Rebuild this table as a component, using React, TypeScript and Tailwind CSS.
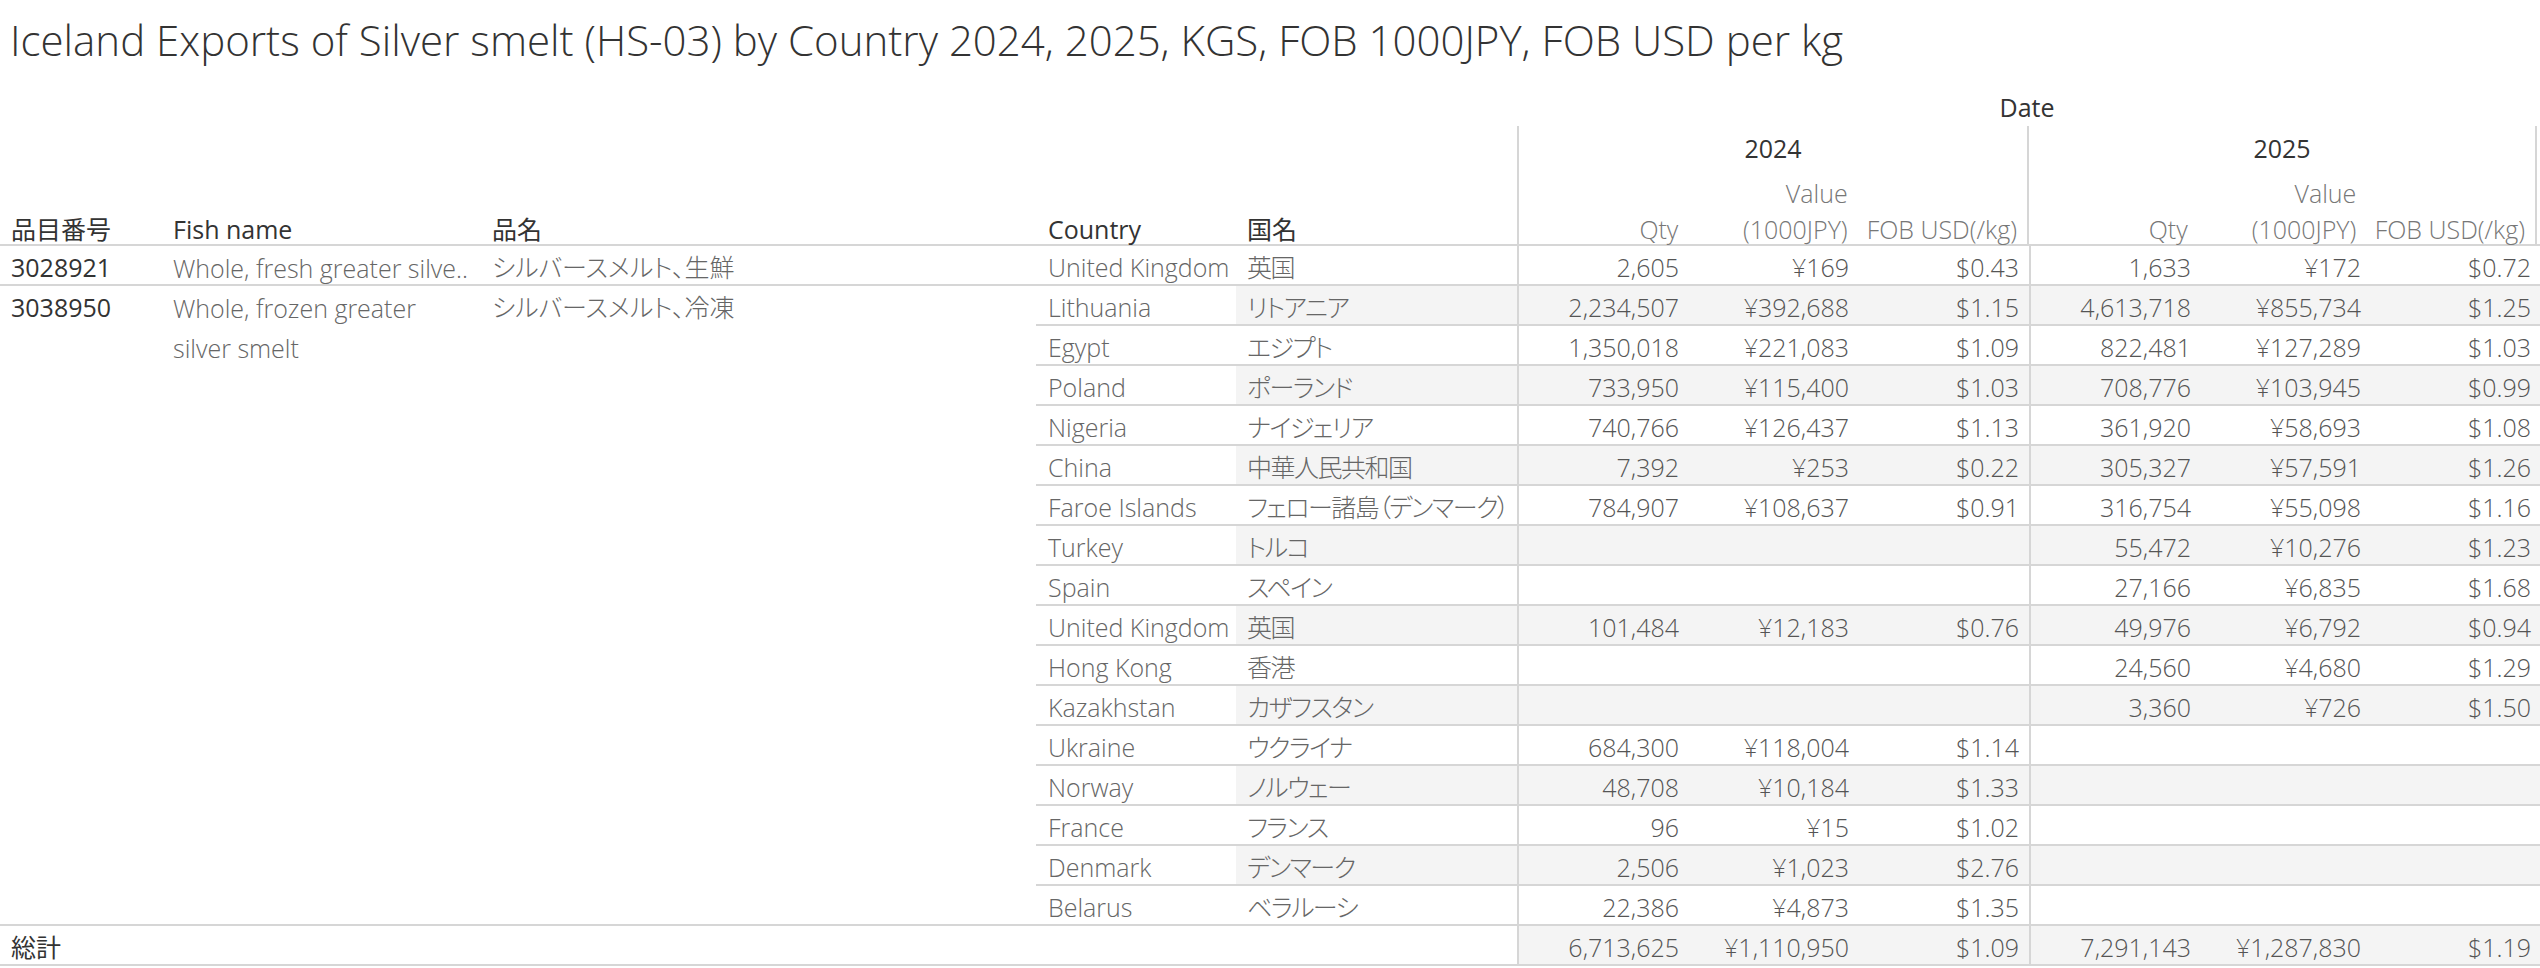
import React from "react";

// one row of the crosstab: country, 国名, then 2024 and 2025 (qty, value, fob)
type Row = {
  country: string;
  jp: string;
  y24: [string, string, string] | null;
  y25: [string, string, string] | null;
};

const firstGroup: Row = {
  country: "United Kingdom",
  jp: "英国",
  y24: ["2,605", "¥169", "$0.43"],
  y25: ["1,633", "¥172", "$0.72"],
};

const frozenRows: Row[] = [
  { country: "Lithuania", jp: "リトアニア", y24: ["2,234,507", "¥392,688", "$1.15"], y25: ["4,613,718", "¥855,734", "$1.25"] },
  { country: "Egypt", jp: "エジプト", y24: ["1,350,018", "¥221,083", "$1.09"], y25: ["822,481", "¥127,289", "$1.03"] },
  { country: "Poland", jp: "ポーランド", y24: ["733,950", "¥115,400", "$1.03"], y25: ["708,776", "¥103,945", "$0.99"] },
  { country: "Nigeria", jp: "ナイジェリア", y24: ["740,766", "¥126,437", "$1.13"], y25: ["361,920", "¥58,693", "$1.08"] },
  { country: "China", jp: "中華人民共和国", y24: ["7,392", "¥253", "$0.22"], y25: ["305,327", "¥57,591", "$1.26"] },
  { country: "Faroe Islands", jp: "フェロー諸島（デンマーク）", y24: ["784,907", "¥108,637", "$0.91"], y25: ["316,754", "¥55,098", "$1.16"] },
  { country: "Turkey", jp: "トルコ", y24: null, y25: ["55,472", "¥10,276", "$1.23"] },
  { country: "Spain", jp: "スペイン", y24: null, y25: ["27,166", "¥6,835", "$1.68"] },
  { country: "United Kingdom", jp: "英国", y24: ["101,484", "¥12,183", "$0.76"], y25: ["49,976", "¥6,792", "$0.94"] },
  { country: "Hong Kong", jp: "香港", y24: null, y25: ["24,560", "¥4,680", "$1.29"] },
  { country: "Kazakhstan", jp: "カザフスタン", y24: null, y25: ["3,360", "¥726", "$1.50"] },
  { country: "Ukraine", jp: "ウクライナ", y24: ["684,300", "¥118,004", "$1.14"], y25: null },
  { country: "Norway", jp: "ノルウェー", y24: ["48,708", "¥10,184", "$1.33"], y25: null },
  { country: "France", jp: "フランス", y24: ["96", "¥15", "$1.02"], y25: null },
  { country: "Denmark", jp: "デンマーク", y24: ["2,506", "¥1,023", "$2.76"], y25: null },
  { country: "Belarus", jp: "ベラルーシ", y24: ["22,386", "¥4,873", "$1.35"], y25: null },
];

const totals: Row = {
  country: "",
  jp: "",
  y24: ["6,713,625", "¥1,110,950", "$1.09"],
  y25: ["7,291,143", "¥1,287,830", "$1.19"],
};

function NumberCells({ values, first }: { values: [string, string, string] | null; first?: boolean }) {
  const v = values ?? ["", "", ""];
  return (
    <div
      className={
        "flex border-l-2 border-[#d6d6d6] " + (first ? "" : "border-r-2")
      }
    >
      {v.map((n, i) => (
        <div key={i} className="w-[170px] shrink-0 pr-[10px] text-right text-[#555] whitespace-nowrap">
          {n}
        </div>
      ))}
    </div>
  );
}

function CountryRow({ row, shaded, last }: { row: Row; shaded: boolean; last: boolean }) {
  return (
    <div
      className={
        "flex " + (last ? "h-[38px]" : "h-[40px] border-b-2 border-[#d6d6d6]")
      }
    >
      <div className="w-[200px] shrink-0 pl-[12px] text-[#666] whitespace-nowrap">{row.country}</div>
      <div className={"flex " + (shaded ? "bg-[#f4f4f4]" : "")}>
        <div className="w-[281px] shrink-0 pl-[11px] text-[#666] tracking-[-1.5px] whitespace-nowrap">{row.jp}</div>
        <NumberCells values={row.y24} first />
        <NumberCells values={row.y25} />
      </div>
    </div>
  );
}

function ItemCells({ code, fish, jp }: { code: string; fish: React.ReactNode; jp: string }) {
  return (
    <div className="flex w-[1036px] shrink-0">
      <div className="w-[162px] shrink-0 pl-[11px] font-normal text-[#333]">{code}</div>
      <div className="w-[320px] shrink-0 pl-[11px] pt-[2px] leading-[40px] text-[#666] whitespace-nowrap">{fish}</div>
      <div className="w-[554px] shrink-0 pl-[10px] text-[#666]">{jp}</div>
    </div>
  );
}

export default function App() {
  return (
    <div className="w-[2540px] h-[968px] bg-white font-['Open_Sans','Noto_Sans_CJK_JP',sans-serif] [font-feature-settings:'palt'] font-light text-[25px] leading-[43px]">
      <div className="h-[88px] flex items-center pl-[10px] pb-[8px] text-[42px] leading-[56px] text-[#333] whitespace-nowrap">
        Iceland Exports of Silver smelt (HS-03) by Country 2024, 2025, KGS, FOB 1000JPY, FOB USD per kg
      </div>

      {/* column headers */}
      <div className="flex border-b-2 border-[#d6d6d6]">
        <div className="w-[1517px] shrink-0 flex items-end">
          <div className="flex font-normal text-[#333] leading-[36px] -mb-[3px]">
            <div className="w-[162px] pl-[11px]">品目番号</div>
            <div className="w-[320px] pl-[11px]">Fish name</div>
            <div className="w-[554px] pl-[10px]">品名</div>
            <div className="w-[200px] pl-[12px]">Country</div>
            <div className="w-[281px] pl-[11px]">国名</div>
          </div>
        </div>
        <div className="w-[1020px] shrink-0">
          <div className="h-[38px] leading-[38px] text-center font-normal text-[#333]">Date</div>
          <div className="flex">
            {["2024", "2025"].map((year, i) => (
              <div
                key={year}
                className={
                  "w-[510px] border-l-2 border-[#d6d6d6] " + (i === 1 ? "border-r-2" : "")
                }
              >
                <div className="h-[44px] flex items-center justify-center font-normal text-[#333]">
                  {year}
                </div>
                <div className="flex items-end h-[74px] leading-[36px] text-[#777]">
                  <div className="w-[170px] pr-[10px] text-right -mb-[3px]">Qty</div>
                  <div className="w-[170px] pr-[10px] text-right -mb-[3px]">
                    Value
                    <br />
                    (1000JPY)
                  </div>
                  <div className="w-[170px] pr-[10px] text-right whitespace-nowrap -mb-[3px]">FOB USD(/kg)</div>
                </div>
              </div>
            ))}
          </div>
        </div>
      </div>

      {/* fresh */}
      <div className="flex h-[40px] border-b-2 border-[#d6d6d6]">
        <ItemCells code="3028921" fish="Whole, fresh greater silve.." jp="シルバースメルト、生鮮" />
        <div className="flex">
          <div className="w-[200px] shrink-0 pl-[12px] text-[#666] whitespace-nowrap">{firstGroup.country}</div>
          <div className="w-[281px] shrink-0 pl-[11px] text-[#666] tracking-[-1.5px]">{firstGroup.jp}</div>
          <NumberCells values={firstGroup.y24} first />
          <NumberCells values={firstGroup.y25} />
        </div>
      </div>

      {/* frozen */}
      <div className="flex border-b-2 border-[#d6d6d6]">
        <ItemCells
          code="3038950"
          fish={
            <>
              Whole, frozen greater
              <br />
              silver smelt
            </>
          }
          jp="シルバースメルト、冷凍"
        />
        <div className="flex flex-col">
          {frozenRows.map((row, i) => (
            <CountryRow key={row.country + i} row={row} shaded={i % 2 === 0} last={i === frozenRows.length - 1} />
          ))}
        </div>
      </div>

      {/* grand total */}
      <div className="flex h-[40px] border-b-2 border-[#d6d6d6]">
        <div className="w-[1517px] shrink-0 pl-[11px] font-normal text-[#333]">総計</div>
        <div className="flex bg-[#f4f4f4]">
          <NumberCells values={totals.y24} first />
          <NumberCells values={totals.y25} />
        </div>
      </div>
    </div>
  );
}
